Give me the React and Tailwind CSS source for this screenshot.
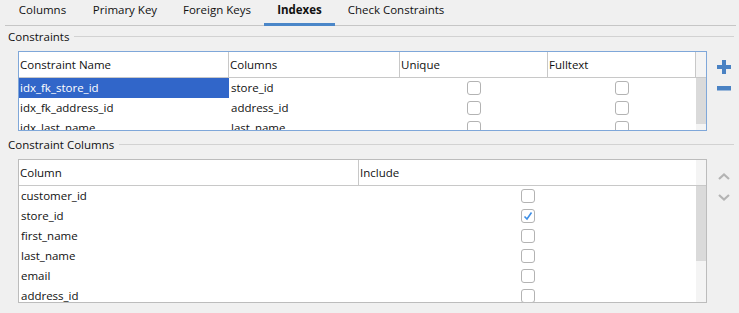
import React from "react";

const tabs = [
  { label: "Columns", w: "w-[75px]" },
  { label: "Primary Key", w: "w-[90px]" },
  { label: "Foreign Keys", w: "w-[94px]" },
  { label: "Indexes", w: "w-[71px]", active: true },
  { label: "Check Constraints", w: "w-[122px]" },
];

const indexes = [
  { name: "idx_fk_store_id", cols: "store_id", selected: true },
  { name: "idx_fk_address_id", cols: "address_id" },
  { name: "idx_last_name", cols: "last_name" },
];

const columns = [
  { name: "customer_id", on: false },
  { name: "store_id", on: true },
  { name: "first_name", on: false },
  { name: "last_name", on: false },
  { name: "email", on: false },
  { name: "address_id", on: false },
];

function Check({ on }) {
  return (
    <div className="w-[14px] h-[14px] rounded-[3px] border border-[#b3b3b3] bg-white flex items-center justify-center">
      {on && (
        <svg width="10" height="10" viewBox="0 0 10 10">
          <polyline points="1.5,5.5 4,8 8.5,1.5" fill="none" stroke="#3f8fe6" strokeWidth="1.6" />
        </svg>
      )}
    </div>
  );
}

function GroupLabel({ text, className }) {
  return (
    <div className={`flex items-center h-[19px] pl-[8px] pr-[5px] ${className}`}>
      <span className="leading-[16px]">{text}</span>
      <div className="flex-1 h-px bg-[#d2d2d2] ml-[5px]" />
    </div>
  );
}

function ScrollBar({ thumb }) {
  return (
    <div className="w-[10px] flex flex-col bg-[#f4f4f4]">
      <div className="h-[26px] border-b border-[#c8c8c8]" />
      <div className={`${thumb} bg-[#dadada]`} />
    </div>
  );
}

export default function App() {
  return (
    <div className="w-[739px] h-[313px] bg-[#f0f0f0] text-[11.5px] text-[#111] font-['Segoe_UI','Open_Sans',sans-serif] overflow-hidden">
      {/* tabs */}
      <div className="flex ml-[5px] mr-[3px] h-[26px] border-b border-[#c6c6c6]">
        {tabs.map((t) => (
          <div
            key={t.label}
            className={`${t.w} text-center pt-[2px] leading-[16px] ${
              t.active ? "font-bold border-b-[3px] border-[#4a86c8] -mb-px" : ""
            }`}
          >
            {t.label}
          </div>
        ))}
      </div>

      <GroupLabel text="Constraints" className="mt-[1px]" />

      <div className="flex mt-[5px]">
        <div className="ml-[18px] w-[689px] h-[80px] border border-[#7fa7d9] bg-white flex overflow-hidden">
          <div className="flex-1 flex flex-col">
            <div className="flex h-[26px] border-b border-[#c8c8c8] shrink-0">
              <div className="w-[210px] border-r border-[#c8c8c8] pl-[1px] flex items-center">Constraint Name</div>
              <div className="w-[171px] border-r border-[#c8c8c8] pl-[1px] flex items-center">Columns</div>
              <div className="w-[148px] border-r border-[#c8c8c8] pl-[1px] flex items-center">Unique</div>
              <div className="w-[148px] border-r border-[#c8c8c8] pl-[1px] flex items-center">Fulltext</div>
            </div>
            {indexes.map((r) => (
              <div key={r.name} className="flex h-[20px] shrink-0">
                <div
                  className={`w-[210px] pl-[1px] flex items-center ${
                    r.selected ? "bg-[#3166c9] text-white" : ""
                  }`}
                >
                  {r.name}
                </div>
                <div className="w-[171px] pl-[2px] flex items-center">{r.cols}</div>
                <div className="w-[148px] flex items-center justify-center">
                  <Check />
                </div>
                <div className="w-[148px] flex items-center justify-center">
                  <Check />
                </div>
              </div>
            ))}
          </div>
          <ScrollBar thumb="h-[46px]" />
        </div>
        <div className="ml-[10px] flex flex-col pt-[9px]">
          <svg width="14" height="14" viewBox="0 0 14 14">
            <rect x="5" y="0" width="4" height="14" fill="#4a82c3" />
            <rect x="0" y="5" width="14" height="4" fill="#4a82c3" />
          </svg>
          <svg width="14" height="5" viewBox="0 0 14 5" className="mt-[12px]">
            <rect x="0" y="0" width="14" height="4.5" fill="#4a82c3" />
          </svg>
        </div>
      </div>

      <GroupLabel text="Constraint Columns" className="mt-[4px]" />

      <div className="flex mt-[5px]">
        <div className="ml-[18px] w-[689px] h-[144px] border border-[#bcbcbc] bg-white flex overflow-hidden">
          <div className="flex-1 flex flex-col">
            <div className="flex h-[26px] border-b border-[#c8c8c8] shrink-0">
              <div className="w-[340px] border-r border-[#c8c8c8] pl-[1px] flex items-center">Column</div>
              <div className="flex-1 pl-[1px] flex items-center">Include</div>
            </div>
            {columns.map((c) => (
              <div key={c.name} className="flex h-[20px] shrink-0">
                <div className="w-[340px] pl-[2px] flex items-center">{c.name}</div>
                <div className="flex-1 flex items-center justify-center">
                  <Check on={c.on} />
                </div>
              </div>
            ))}
          </div>
          <ScrollBar thumb="h-[75px]" />
        </div>
        <div className="ml-[11px] flex flex-col pt-[14px]">
          <svg width="12" height="7" viewBox="0 0 12 7">
            <polyline points="1,6 6,1.5 11,6" fill="none" stroke="#b4b4b4" strokeWidth="2.2" />
          </svg>
          <svg width="12" height="7" viewBox="0 0 12 7" className="mt-[14px]">
            <polyline points="1,1 6,5.5 11,1" fill="none" stroke="#b4b4b4" strokeWidth="2.2" />
          </svg>
        </div>
      </div>
    </div>
  );
}
